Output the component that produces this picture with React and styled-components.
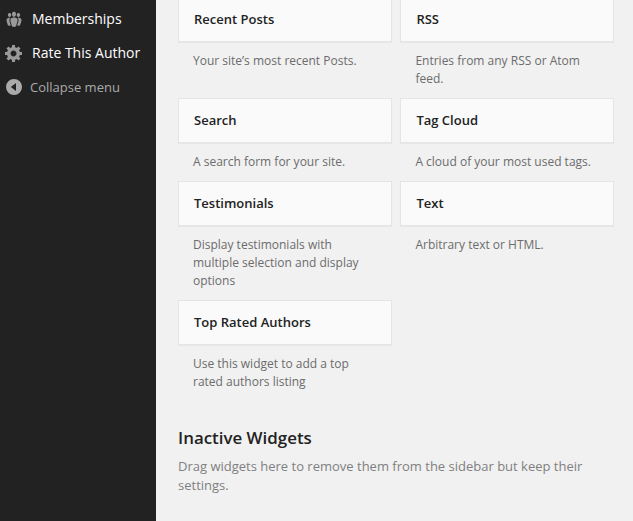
import React from 'react';
import styled, { createGlobalStyle } from 'styled-components';

const GlobalStyle = createGlobalStyle`
  * { box-sizing: border-box; }
  body {
    margin: 0;
    background: #f1f1f1;
    font-family: "Open Sans", sans-serif;
    overflow: hidden;
  }
`;

const Page = styled.div`
  display: flex;
  height: 521px;
  overflow: hidden;
`;

const Sidebar = styled.nav`
  flex: 0 0 156px;
  background: #222;
  padding-top: 2px;
`;

const MenuItem = styled.a`
  display: flex;
  align-items: center;
  height: 34px;
  padding-left: 4px;
  gap: ${(p) => (p.$muted ? '6px' : '8px')};
  color: ${(p) => (p.$muted ? '#aaa' : '#fff')};
  font-size: ${(p) => (p.$muted ? '13px' : '14px')};
  line-height: 18px;
  white-space: nowrap;
`;

const Icon = styled.svg`
  flex: none;
  display: block;
  width: 20px;
  height: 20px;
  fill: ${(p) => (p.$bright ? '#aaa' : '#999')};
`;

const Main = styled.main`
  flex: 1;
  padding: 0 18px 0 22px;
`;

const WidgetGrid = styled.div`
  display: grid;
  grid-template-columns: 214px 214px;
  column-gap: 8.4px;
  margin-top: -3px;
`;

const WidgetTitle = styled.h4`
  height: 45px;
  margin: 0;
  padding: 12px 15px;
  border: 1px solid #e5e5e5;
  background: #fafafa;
  box-shadow: 0 1px 1px rgba(0, 0, 0, 0.04);
  color: #222;
  font-size: 13px;
  font-weight: 600;
  line-height: 19px;
`;

const WidgetDescription = styled.p`
  margin: 0;
  padding: 10px 15px;
  color: #6c6c6c;
  font-size: 12px;
  line-height: 18px;
`;

const SectionTitle = styled.h3`
  margin: 25px 0 0;
  color: #222;
  font-size: 16.9px;
  font-weight: 600;
  line-height: 24px;
`;

const SectionText = styled.p`
  margin: 7px 0 0;
  color: #808080;
  font-size: 13px;
  line-height: 19px;
`;

const GroupsIcon = () => (
  <Icon viewBox="0 0 20 20">
    <path d="M8.03 4.46c-.29 1.28.55 3.46 1.97 3.46 1.41 0 2.25-2.18 1.96-3.46-.22-.98-1.08-1.63-1.96-1.63-.89 0-1.74.65-1.97 1.63zm-4.13.9c-.25 1.08.47 2.93 1.67 2.93s1.92-1.85 1.67-2.93c-.19-.83-.92-1.39-1.67-1.39s-1.48.56-1.67 1.39zm8.86 0c-.25 1.08.47 2.93 1.66 2.93 1.2 0 1.92-1.85 1.67-2.93-.19-.83-.92-1.39-1.67-1.39-.74 0-1.47.56-1.66 1.39zm-.59 11.43l1.25-4.3C14.2 10 12.71 8.47 10 8.47c-2.72 0-4.21 1.53-3.44 4.02l1.26 4.3C8.05 17.51 9 18 10 18c.98 0 1.94-.49 2.17-1.21zm-6.1-7.63c-.49.67-.96 1.83-.42 3.59l1.12 3.79c-.34.2-.77.31-1.2.31-.85 0-1.65-.41-1.85-1.03l-1.07-3.65c-.65-2.11.61-3.4 2.92-3.4.27 0 .54.02.79.06-.1.1-.2.22-.29.33zm8.35-.39c2.31 0 3.58 1.29 2.92 3.4l-1.07 3.65c-.2.62-1 1.03-1.85 1.03-.43 0-.86-.11-1.2-.31l1.11-3.77c.55-1.78.08-2.94-.42-3.61-.08-.11-.18-.23-.28-.33.25-.04.51-.06.79-.06z" />
  </Icon>
);

const GearIcon = () => (
  <Icon viewBox="0 0 20 20">
    <path d="M18 12h-2.18c-.17.7-.44 1.35-.81 1.93l1.54 1.54-2.1 2.1-1.54-1.54c-.58.36-1.23.63-1.91.79V19H8v-2.18c-.68-.16-1.33-.43-1.91-.79l-1.54 1.54-2.12-2.12 1.54-1.54c-.36-.58-.63-1.23-.79-1.91H1V9.03h2.17c.16-.7.44-1.35.8-1.94L2.43 5.55l2.1-2.1 1.54 1.54c.58-.37 1.24-.64 1.93-.81V2h3v2.18c.68.16 1.33.43 1.91.79l1.54-1.54 2.12 2.12-1.54 1.54c.36.59.64 1.24.8 1.94H18V12zm-8.5 1.5c1.66 0 3-1.34 3-3s-1.34-3-3-3-3 1.34-3 3 1.34 3 3 3z" />
  </Icon>
);

const CollapseIcon = () => (
  <Icon $bright viewBox="0 0 20 20">
    <path fillRule="evenodd" d="M10 2a8 8 0 1 1 0 16 8 8 0 0 1 0-16zM12 6v8l-5.2-4z" />
  </Icon>
);

const widgets = [
  ['Recent Posts', 'Your site’s most recent Posts.'],
  ['RSS', 'Entries from any RSS or Atom feed.'],
  ['Search', 'A search form for your site.'],
  ['Tag Cloud', 'A cloud of your most used tags.'],
  ['Testimonials', 'Display testimonials with multiple selection and display options'],
  ['Text', 'Arbitrary text or HTML.'],
  ['Top Rated Authors', 'Use this widget to add a top rated authors listing'],
];

export default function App() {
  return (
    <Page>
      <GlobalStyle />
      <Sidebar>
        <MenuItem><GroupsIcon />Memberships</MenuItem>
        <MenuItem><GearIcon />Rate This Author</MenuItem>
        <MenuItem $muted><CollapseIcon />Collapse menu</MenuItem>
      </Sidebar>
      <Main>
        <WidgetGrid>
          {widgets.map(([title, description]) => (
            <section key={title}>
              <WidgetTitle>{title}</WidgetTitle>
              <WidgetDescription>{description}</WidgetDescription>
            </section>
          ))}
        </WidgetGrid>
        <SectionTitle>Inactive Widgets</SectionTitle>
        <SectionText>
          Drag widgets here to remove them from the sidebar but keep their settings.
        </SectionText>
      </Main>
    </Page>
  );
}
